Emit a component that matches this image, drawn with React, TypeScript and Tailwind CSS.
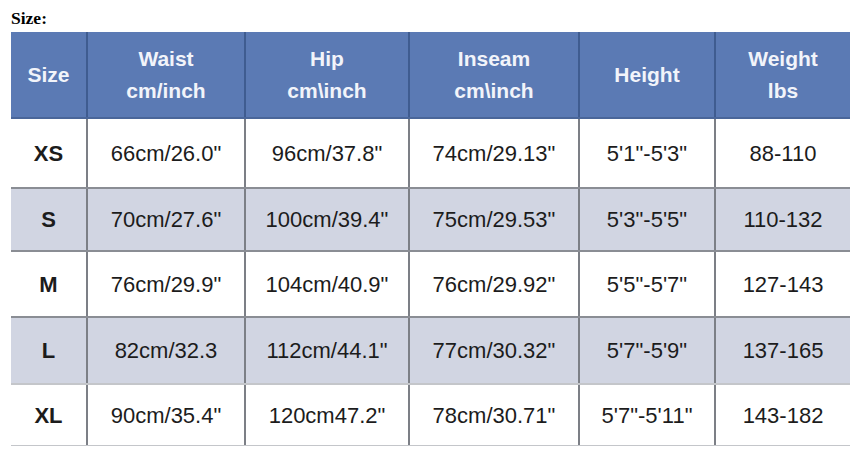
import React from "react";

const cols = ["w-[75px]", "w-[158px]", "w-[164px]", "w-[170px]", "w-[136px]", "w-[136px]"];

const header: string[][] = [
  ["Size"],
  ["Waist", "cm/inch"],
  ["Hip", "cm\\inch"],
  ["Inseam", "cm\\inch"],
  ["Height"],
  ["Weight", "lbs"],
];

const rows: { cells: string[]; h: string; shaded: boolean }[] = [
  { cells: ["XS", "66cm/26.0\"", "96cm/37.8\"", "74cm/29.13\"", "5'1\"-5'3\"", "88-110"], h: "h-[68px]", shaded: false },
  { cells: ["S", "70cm/27.6\"", "100cm/39.4\"", "75cm/29.53\"", "5'3\"-5'5\"", "110-132"], h: "h-[63px]", shaded: true },
  { cells: ["M", "76cm/29.9\"", "104cm/40.9\"", "76cm/29.92\"", "5'5\"-5'7\"", "127-143"], h: "h-[66px]", shaded: false },
  { cells: ["L", "82cm/32.3", "112cm/44.1\"", "77cm/30.32\"", "5'7\"-5'9\"", "137-165"], h: "h-[67px]", shaded: true },
  { cells: ["XL", "90cm/35.4\"", "120cm47.2\"", "78cm/30.71\"", "5'7\"-5'11\"", "143-182"], h: "h-[63px]", shaded: false },
];

export default function App() {
  return (
    <div className="w-[858px] h-[450px] bg-white pl-[11px] overflow-hidden">
      <div
        className="h-[32px] pt-[8px] text-[17.5px] font-bold leading-[20px] text-black"
        style={{ fontFamily: '"Liberation Serif", serif' }}
      >
        Size:
      </div>
      <div className="flex flex-col w-[839px]" style={{ fontFamily: '"Liberation Sans", Arial, sans-serif' }}>
        <div className="flex h-[87px] bg-[#5b7ab4] border-b-2 border-[#4a6699]">
          {header.map((lines, i) => (
            <div
              key={i}
              className={`${cols[i]} flex flex-col items-center justify-center text-[21px] font-bold leading-[32px] text-[#f2f4fa] ${i > 0 ? "border-l-2 border-[#3f5c90]" : ""}`}
            >
              {lines.map((l, j) => (
                <span key={j}>{l}</span>
              ))}
            </div>
          ))}
        </div>
        {rows.map((r, ri) => (
          <div
            key={ri}
            className={`flex ${r.h} ${r.shaded ? "bg-[#d1d5e2]" : "bg-white"} ${ri > 0 ? "border-t-2 border-[#8a8d94]" : ""} ${ri === rows.length - 1 ? "border-b border-[#c4c6ca]" : ""}`}
          >
            {r.cells.map((c, ci) => (
              <div
                key={ci}
                className={`${cols[ci]} flex items-center justify-center text-[#1c1c1c] text-[22px] ${ci === 0 ? "font-bold" : ""} ${ci > 0 ? "border-l-2 border-[#7c7f86]" : ""}`}
              >
                {c}
              </div>
            ))}
          </div>
        ))}
      </div>
    </div>
  );
}
